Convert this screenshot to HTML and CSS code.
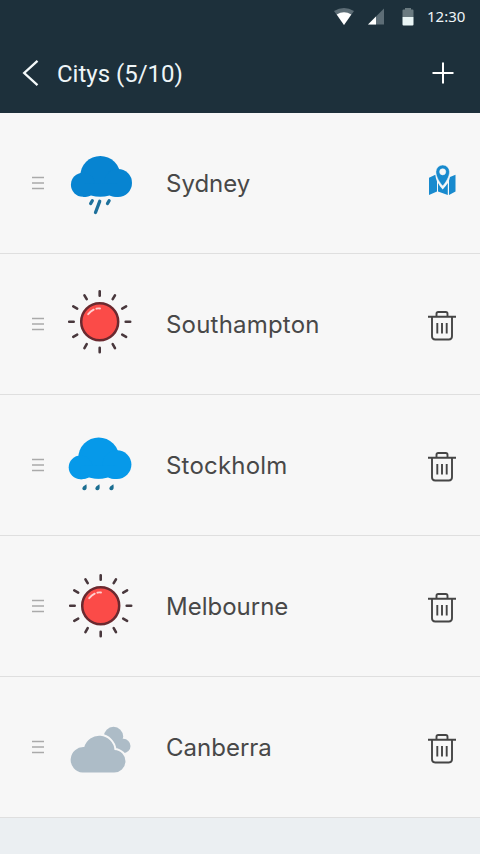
FILE: index.html
```html
<!DOCTYPE html>
<html lang="en">
<head>
<meta charset="utf-8">
<title>Citys</title>
<link rel="stylesheet" href="styles.css">
</head>
<body>
<svg class="defs" width="0" height="0">
  <symbol id="grip" viewBox="0 0 12 14"><path d="M0 1.500h12M0 7h12M0 12.500h12" stroke="#aaa" stroke-width="1.300"/></symbol>
  <symbol id="sun" viewBox="0 0 70 70">
    <g transform="translate(34.700 32.700)">
      <circle r="18.500" fill="#fb4b48" stroke="#6b292f" stroke-width="2.500"/>
      <path d="M-11.500-7.500Q-9-10.500-6-12M-3.300-13Q-1.500-13.600.3-13.200" fill="none" stroke="#ffd0cf" stroke-width="1.900" stroke-linecap="round"/>
      <g stroke="#49383d" stroke-width="2.600" stroke-linecap="round">
        <path id="ray" d="M0-30.500V-26M0 30.500V26M-30.500 0H-26M30.500 0H26"/>
        <use href="#ray" transform="rotate(30)"/>
        <use href="#ray" transform="rotate(60)"/>
      </g>
    </g>
  </symbol>
  <symbol id="trash" viewBox="0 0 30 34">
    <g fill="none" stroke="#454545" stroke-width="1.900" stroke-linejoin="round">
      <path d="M1 7.800H29M9.500 7.500V4.700Q9.500 3 11.200 3H18.800Q20.500 3 20.500 4.700V7.500M5 8V27.300Q5 30.500 8.200 30.500H21.800Q25 30.500 25 27.300V8M10.300 14V24.500M15 14V24.500M19.700 14V24.500"/>
    </g>
  </symbol>
</svg>
<header class="top">
  <div class="status">
    <svg width="20" height="17" viewBox="0 0 20 17"><path d="M0 3Q10-3 20 3L10 17Z" fill="#5d6d76"/><path d="M2.700 6.500Q10 2 17.300 6.500L10 17Z" fill="#fff"/></svg>
    <svg width="16" height="17" viewBox="0 0 16 17"><path d="M16 .5V16.500H0Z" fill="#5d6d76"/><path d="M8 8.500V16.500H0Z" fill="#fff"/></svg>
    <svg width="12" height="18" viewBox="0 0 12 18"><path d="M1.500 1.500H3V0H9V1.500H10.500Q11.500 1.500 11.500 2.500V9H.5V2.500Q.5 1.500 1.500 1.500Z" fill="#6a7a80"/><path d="M.5 9H11.500V16.500Q11.500 17.500 10.500 17.500H1.500Q.5 17.500.5 16.500Z" fill="#e9f5f5"/></svg>
    <span class="clock">12:30</span>
  </div>
  <div class="bar">
    <svg class="back" width="18" height="28" viewBox="0 0 18 28"><path d="M15.500 1.800 2.200 14 15.500 26.200" fill="none" stroke="#f4f9fa" stroke-width="2.300"/></svg>
    <h1 class="title">Citys (5/10)</h1>
    <svg width="22" height="22" viewBox="0 0 22 22"><path d="M11 .5V21.500M.5 11H21.500" stroke="#fff" stroke-width="2"/></svg>
  </div>
</header>
<main>
  <div class="row">
    <svg class="grip"><use href="#grip"/></svg>
    <svg class="weather" viewBox="0 0 70 70">
      <g fill="#0784d1"><circle cx="35.300" cy="28" r="20"/><circle cx="17.900" cy="36.800" r="12"/><circle cx="53" cy="35" r="14"/><path d="M18 36 53 35V48.500Q49 49.500 44.500 47.500Q35 50 26 47.500Q22 49.500 18 48.700Z"/></g>
      <path d="M27.300 52.700 25.700 55.500M34.700 53.300 30.500 64.500M44.100 52.700 42.500 55.500" stroke="#1d709b" stroke-width="3.300" stroke-linecap="round"/>
    </svg>
    <span class="name">Sydney</span>
    <svg class="action" viewBox="0 0 30 34">
      <path d="M2 11.700 8.300 8.800Q8.700 12.500 10 15.500V25.500L2 29ZM11 17Q12.700 20.500 15.700 23.500Q18.800 20.300 20.800 17V29L11 25.500ZM22 14.500 23 11 28.500 8.800V25.500L22 29Z" fill="#188ace"/>
      <path fill-rule="evenodd" d="M15.700-1A6.800 6.800 0 0 1 22.500 5.800C22.500 11 18.500 17 15.700 20C12.900 17 8.900 11 8.900 5.800A6.800 6.800 0 0 1 15.700-1ZM15.700 2.700A3.100 3.100 0 1 0 15.700 8.900A3.100 3.100 0 1 0 15.700 2.700Z" fill="#188ace" stroke="#f7f7f7" stroke-width=".5"/>
    </svg>
  </div>
  <div class="row">
    <svg class="grip"><use href="#grip"/></svg>
    <svg class="weather"><use href="#sun"/></svg>
    <span class="name wide">Southampton</span>
    <svg class="action trash"><use href="#trash"/></svg>
  </div>
  <div class="row">
    <svg class="grip"><use href="#grip"/></svg>
    <svg class="weather" viewBox="0 0 70 70">
      <g fill="#0699e9"><circle cx="33.700" cy="28" r="20.500"/><circle cx="15.600" cy="37.300" r="11.900"/><circle cx="52" cy="34.600" r="14.400"/><path d="M15.600 36 52 35V49Q47.500 49.500 43 47.500Q33.500 50 24 47.500Q20 49.500 15.600 49.200Z"/></g>
      <g fill="#1b6e91"><path id="drop" d="M21.400 54.200Q22.400 60 19.700 60.200Q15.800 59.700 18.200 56.400Z"/><use href="#drop" x="13"/><use href="#drop" x="27"/></g>
    </svg>
    <span class="name wide">Stockholm</span>
    <svg class="action trash"><use href="#trash"/></svg>
  </div>
  <div class="row">
    <svg class="grip"><use href="#grip"/></svg>
    <svg class="weather low"><use href="#sun"/></svg>
    <span class="name">Melbourne</span>
    <svg class="action trash"><use href="#trash"/></svg>
  </div>
  <div class="row">
    <svg class="grip"><use href="#grip"/></svg>
    <svg class="weather" viewBox="0 0 70 70">
      <g fill="#adbcc7"><circle cx="48.500" cy="24.500" r="9.700"/><circle cx="58.300" cy="34" r="7.200"/><path d="M48 27 58 27 58 41 50 38Z"/></g>
      <path d="M17.500 60.500A12.700 12.700 0 1 1 19.300 35.100A15.400 15.400 0 0 1 49.500 37.900A11.300 11.300 0 0 1 48.800 60.500Z" fill="#adbcc7" stroke="#f7f7f7" stroke-width="4" paint-order="stroke"/>
    </svg>
    <span class="name">Canberra</span>
    <svg class="action trash"><use href="#trash"/></svg>
  </div>
</main>
</body>
</html>
```
FILE: styles.css
```css
* { box-sizing: border-box; }
body {
  margin: 0;
  min-height: 854px;
  background: #ebeff2;
  font-family: Roboto, sans-serif;
}
svg { display: block; flex: none; overflow: visible; }
.defs { position: absolute; }
.top {
  height: 113px;
  background: #1d303b;
  color: #eef5f7;
}
.status {
  display: flex;
  align-items: center;
  justify-content: flex-end;
  height: 33px;
  padding-right: 15px;
}
.status svg + svg { margin-left: 14px; }
.status svg + svg + svg { margin-left: 18px; }
.clock {
  width: 38px;
  margin: -2px 0 0 13px;
  font: 15px/20px "Noto Sans", sans-serif;
  white-space: nowrap;
}
.bar {
  display: flex;
  align-items: center;
  height: 80px;
  padding: 0 26px 0 22px;
}
.title {
  flex: 1;
  margin: 2px 0 0 17px;
  font-size: 24px;
  font-weight: 400;
}
.row {
  display: flex;
  align-items: center;
  height: 141px;
  padding: 0 23px 0 32px;
  background: #f7f7f7;
  border-bottom: 1px solid #dfdfdf;
}
.grip { width: 12px; height: 14px; }
.weather { width: 70px; height: 70px; margin-left: 21px; }
.low { margin: 4px 0 0 22px; }
.low + .name { margin-left: 30px; }
.name {
  flex: 1;
  margin: 2px 0 0 31px;
  color: #484848;
  font: 24px/30px Inter, sans-serif;
}
.wide { letter-spacing: 0.2px; }
.action { width: 30px; height: 34px; }
.trash { margin-top: 3px; }
```
